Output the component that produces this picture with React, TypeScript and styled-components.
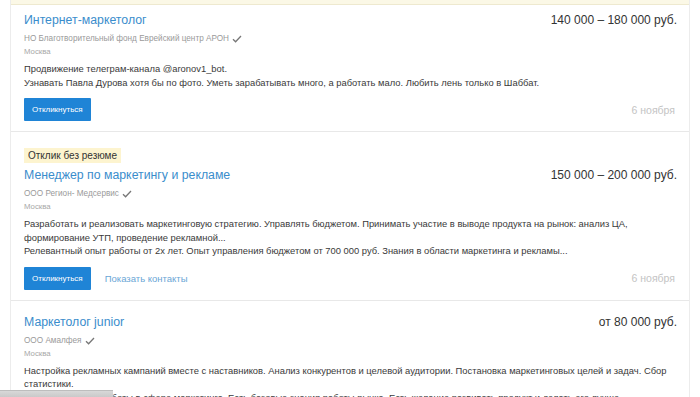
import styled, { createGlobalStyle } from "styled-components";

const GlobalStyle = createGlobalStyle`
  html, body {
    margin: 0;
    padding: 0;
    background: #ffffff;
    overflow: hidden;
  }
  body {
    font-family: "Liberation Sans", Arial, sans-serif;
  }
`;

interface Vacancy {
  title: string;
  salary: string;
  company: string;
  city: string;
  lines: string[];
  badge?: string;
  contacts?: boolean;
  date?: string;
}

// description lines are kept as the visual lines of the listing
const vacancies: Vacancy[] = [
  {
    title: "Интернет-маркетолог",
    salary: "140 000 – 180 000 руб.",
    company: "НО Благотворительный фонд Еврейский центр АРОН",
    city: "Москва",
    lines: [
      "Продвижение телеграм-канала @aronov1_bot.",
      "Узнавать Павла Дурова хотя бы по фото. Уметь зарабатывать много, а работать мало. Любить лень только в Шаббат.",
    ],
    date: "6 ноября",
  },
  {
    title: "Менеджер по маркетингу и рекламе",
    salary: "150 000 – 200 000 руб.",
    company: "ООО Регион- Медсервис",
    city: "Москва",
    badge: "Отклик без резюме",
    contacts: true,
    lines: [
      "Разработать и реализовать маркетинговую стратегию. Управлять бюджетом. Принимать участие в выводе продукта на рынок: анализ ЦА,",
      "формирование УТП, проведение рекламной...",
      "Релевантный опыт работы от 2х лет. Опыт управления бюджетом от 700 000 руб. Знания в области маркетинга и рекламы...",
    ],
    date: "6 ноября",
  },
  {
    title: "Маркетолог junior",
    salary: "от 80 000 руб.",
    company: "ООО Амалфея",
    city: "Москва",
    lines: [
      "Настройка рекламных кампаний вместе с наставников. Анализ конкурентов и целевой аудитории. Постановка маркетинговых целей и задач. Сбор",
      "статистики.",
      "Небольшой опыт работы в сфере маркетинга. Есть базовые знания работы рынка. Есть желание развивать продукт и делать его лучше.",
    ],
  },
];

const Page = styled.div`
  position: relative;
  width: 700px;
  height: 397px;
  overflow: hidden;
  background: #fff;
`;

const List = styled.div`
  margin-left: 10px;
  width: 678px;
  border-left: 1px solid #ececec;
  border-right: 1px solid #ececec;
  display: flex;
  flex-direction: column;
`;

const TopStrip = styled.div`
  height: 4px;
  background: #fbf8e6;
  border-bottom: 1px solid #eee9cf;
`;

const Card = styled.div<{ $first?: boolean }>`
  padding: ${(p) => (p.$first ? "6px" : "12px")} 12px 0 13px;
  border-bottom: 1px solid #e8e8e8;
  display: flex;
  flex-direction: column;
`;

const Badge = styled.span`
  align-self: flex-start;
  margin-top: 4px;
  margin-bottom: 3px;
  height: 15px;
  padding: 0 4px;
  background: #fdf4cf;
  color: #333;
  font-size: 10px;
  line-height: 15px;
`;

const Head = styled.div`
  display: flex;
  justify-content: space-between;
  align-items: center;
  height: 18px;
`;

const Title = styled.a`
  color: #3a8dcc;
  font-size: 12.3px;
  line-height: 18px;
  text-decoration: none;
`;

const Salary = styled.span`
  color: #333;
  font-size: 12px;
  line-height: 18px;
`;

const Company = styled.div`
  display: flex;
  align-items: center;
  gap: 3px;
  margin-top: 4px;
  color: #9a9a9a;
  font-size: 8.2px;
  line-height: 12px;
`;

const City = styled.div`
  color: #a8a8a8;
  font-size: 7.8px;
  line-height: 13px;
`;

const Description = styled.div`
  margin-top: 4px;
  display: flex;
  flex-direction: column;
`;

const Line = styled.span`
  color: #3a3a3a;
  font-size: 9.4px;
  line-height: 13.5px;
  white-space: nowrap;
`;

const Footer = styled.div`
  display: flex;
  align-items: center;
  gap: 14px;
  margin-top: 9px;
  height: 23px;
  padding-bottom: 10px;
`;

const Button = styled.button`
  height: 23px;
  padding: 0 8px;
  border: none;
  border-radius: 1px;
  background: #1f84d6;
  color: #fff;
  font-family: inherit;
  font-size: 8px;
`;

const Link = styled.a`
  color: #6aa6d6;
  font-size: 9.5px;
`;

const DateText = styled.span`
  margin-left: auto;
  margin-right: 2px;
  color: #c4c4c4;
  font-size: 10.5px;
`;

const Overlay = styled.div`
  position: absolute;
  left: 0;
  bottom: 0;
  width: 113px;
  height: 6px;
  background: linear-gradient(#d8d8d8, #c9c9c9);
  border-top: 1px solid #bdbdbd;
`;

const Check = () => (
  <svg width="10" height="8" viewBox="0 0 10 8" fill="none">
    <path d="M1 4.2 L3.6 6.8 L9 1" stroke="#777" strokeWidth="1.3" />
  </svg>
);

export default function App() {
  return (
    <Page>
      <GlobalStyle />
      <List>
        <TopStrip />
        {vacancies.map((v, idx) => (
          <Card key={idx} $first={idx === 0}>
            {v.badge && <Badge>{v.badge}</Badge>}
            <Head>
              <Title>{v.title}</Title>
              <Salary>{v.salary}</Salary>
            </Head>
            <Company>
              {v.company}
              <Check />
            </Company>
            <City>{v.city}</City>
            <Description>
              {v.lines.map((line, i) => (
                <Line key={i}>{line}</Line>
              ))}
            </Description>
            {v.date && (
              <Footer>
                <Button>Откликнуться</Button>
                {v.contacts && <Link>Показать контакты</Link>}
                <DateText>{v.date}</DateText>
              </Footer>
            )}
          </Card>
        ))}
      </List>
      <Overlay />
    </Page>
  );
}
